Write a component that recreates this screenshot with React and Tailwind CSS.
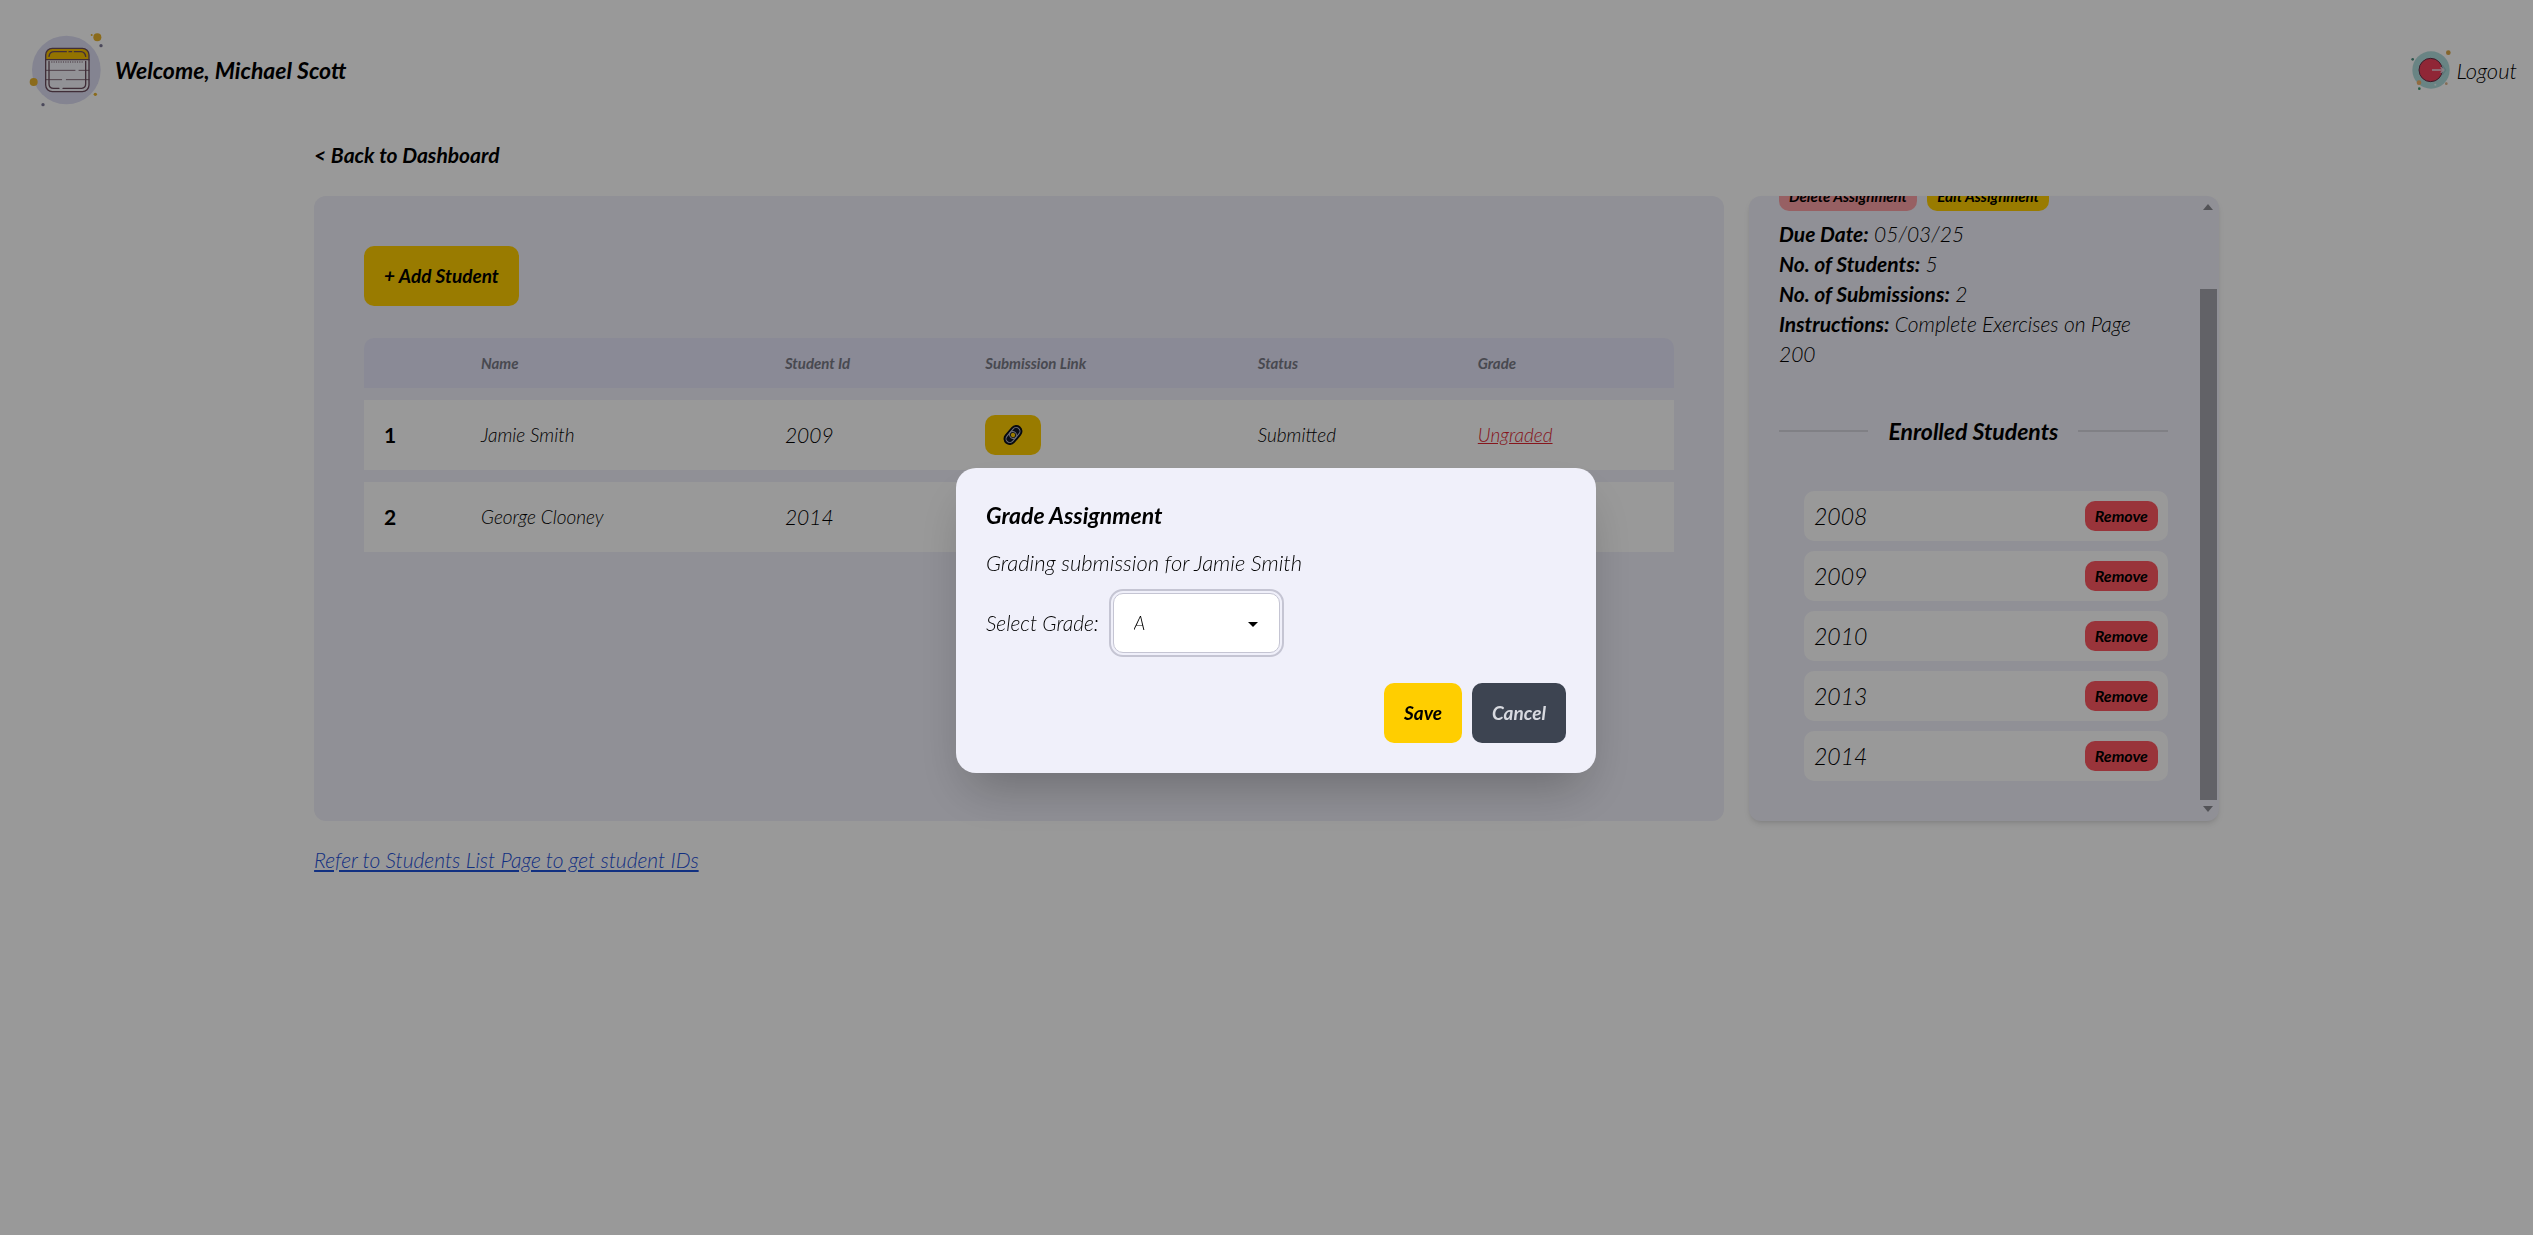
import React from "react";

const submissions = [
  { name: "Jamie Smith", id: "2009", status: "Submitted", grade: "Ungraded" },
  { name: "George Clooney", id: "2014", status: "Submitted", grade: "Ungraded" },
];

const enrolled = ["2008", "2009", "2010", "2013", "2014"];

function NotebookLogo() {
  return (
    <svg viewBox="20 30 240 240" className="size-20" fill="none" aria-hidden="true">
      <circle cx="138" cy="150" r="103" fill="#dcdcf2" />
      <circle cx="231" cy="52" r="12" fill="#e8b32e" />
      <circle cx="214" cy="45" r="3" fill="#e8b32e" />
      <circle cx="242" cy="77" r="5" fill="#7d7a98" />
      <circle cx="40" cy="186" r="12" fill="#e8b32e" />
      <circle cx="225" cy="223" r="5" fill="#e8b32e" />
      <circle cx="68" cy="254" r="5" fill="#7d7a98" />
      <rect x="76" y="85" width="130" height="130" rx="20" fill="#f4f4fb" />
      <path d="M76 119v-14a20 20 0 0 1 20-20h90a20 20 0 0 1 20 20v14z" fill="#f5c000" />
      <g stroke="#6b4d5e" strokeWidth="4" strokeLinecap="round">
        <rect x="76" y="85" width="130" height="130" rx="20" />
        <path d="M76 119h130" />
        <path d="M76 151h88M176 151h30M76 179h48M138 179h68" strokeWidth="2.5" />
        <path d="M86 109q2-14 16-14h36M146 95h8M162 95h20q12 1 14 14" />
        <path d="M86 124v68q0 13 14 13h16M128 205h56q12-1 12-13v-68" />
        <path d="M94 126h96" strokeWidth="3" strokeDasharray="1 6" />
      </g>
    </svg>
  );
}

function LogoutIcon() {
  return (
    <svg viewBox="84 54 132 132" className="size-11" fill="none" aria-hidden="true">
      <circle cx="150" cy="120" r="56" fill="#b0dcdc" />
      <circle cx="149" cy="120" r="35" fill="#f0405a" stroke="#60334a" strokeWidth="3" />
      <path d="M153 120h32M179 112l9 8-9 8" stroke="#e8d5df" strokeWidth="4" />
      <path d="M184 105l10 15-10 15" stroke="#9cc8cc" strokeWidth="4" />
      <circle cx="202" cy="68" r="7" fill="#dca848" />
      <circle cx="114" cy="158" r="7" fill="#f2b36a" />
      <circle cx="95" cy="88" r="4" fill="#4c8f80" />
      <circle cx="115" cy="176" r="4" fill="#3f9a72" />
      <circle cx="196" cy="161" r="4" fill="#dcb48a" />
      <circle cx="163" cy="164" r="3" fill="#e8f4f4" />
    </svg>
  );
}

function ChainIcon() {
  return (
    <svg viewBox="0 0 24 24" className="size-6" fill="none" aria-hidden="true">
      <g transform="rotate(-50 12 12)">
        <rect x="1.500" y="6.500" width="21" height="11" rx="5.500" fill="#101828" stroke="#0b0f1a" strokeWidth="1.500" />
        <rect x="3.300" y="8.200" width="12" height="7.600" rx="3.800" stroke="#b8b8c8" strokeWidth="1" />
        <rect x="8.700" y="8.200" width="12" height="7.600" rx="3.800" stroke="#b8b8c8" strokeWidth="1" />
        <circle cx="12" cy="12" r="2.200" fill="#ffce00" />
      </g>
    </svg>
  );
}

function Header() {
  return (
    <header className="flex h-35 items-center justify-between pr-4 pl-[27px]">
      <div className="flex items-center gap-2">
        <NotebookLogo />
        <h1 className="text-[23px] font-bold">Welcome, Michael Scott</h1>
      </div>
      <button type="button" className="flex items-center gap-1 text-[22px]">
        <LogoutIcon />
        Logout
      </button>
    </header>
  );
}

function SubmissionsTable() {
  return (
    <table className="mt-5 w-full table-fixed border-separate border-spacing-x-0 border-spacing-y-3 text-left text-[19px]">
      <colgroup>
        <col className="w-[7.4%]" />
        <col className="w-[23.2%]" />
        <col className="w-[15.3%]" />
        <col className="w-[20.8%]" />
        <col className="w-[16.8%]" />
        <col className="w-[16.5%]" />
      </colgroup>
      <thead>
        <tr className="h-[50px] bg-[#e6e6fa] text-[15px] text-[#797a86]">
          <th className="rounded-tl-[10px] px-5" aria-label="Number" />
          <th className="px-5 font-bold">Name</th>
          <th className="px-5 font-bold">Student Id</th>
          <th className="px-5 font-bold">Submission Link</th>
          <th className="px-5 font-bold">Status</th>
          <th className="rounded-tr-[10px] px-5 font-bold">Grade</th>
        </tr>
      </thead>
      <tbody>
        {submissions.map((s, i) => (
          <tr key={s.id} className="h-[70px] bg-white">
            <th className="px-5 text-[21px] font-bold not-italic">{i + 1}</th>
            <td className="px-5">{s.name}</td>
            <td className="px-5 text-[21px]">{s.id}</td>
            <td className="px-5">
              <button
                type="button"
                aria-label="Open submission"
                className="flex h-10 w-14 items-center justify-center rounded-[10px] bg-[#ffce00]"
              >
                <ChainIcon />
              </button>
            </td>
            <td className="px-5">{s.status}</td>
            <td className="px-5">
              <button type="button" className="text-[#e02530] underline">
                {s.grade}
              </button>
            </td>
          </tr>
        ))}
      </tbody>
    </table>
  );
}

function ScrollRail() {
  return (
    <div className="mr-[2px] flex w-[17px] shrink-0 flex-col items-center" aria-hidden="true">
      <svg viewBox="0 0 10 6" className="mt-2 h-[6px] w-[10px]" fill="#8b8b92">
        <path d="M0 6l5-6 5 6z" />
      </svg>
      <div className="mt-[79px] w-full flex-1 bg-[#a4a4ac]" />
      <svg viewBox="0 0 10 6" className="mt-[6px] mb-[9px] h-[6px] w-[10px]" fill="#8b8b92">
        <path d="M0 0l5 6 5-6z" />
      </svg>
    </div>
  );
}

function Detail({ label, children }) {
  return (
    <p>
      <strong className="font-bold">{label}</strong> {children}
    </p>
  );
}

function AssignmentPanel() {
  return (
    <aside className="flex h-[625px] overflow-hidden rounded-xl bg-[#f0f0fa] shadow-md">
      <div className="flex min-w-0 flex-1 flex-col justify-end overflow-hidden pr-8 pb-10 pl-[30px]">
        <div className="flex shrink-0 gap-[10px]">
          <button type="button" className="h-[30px] rounded-[10px] bg-[#fca0a5] px-[10px] text-[15px] font-bold">
            Delete Assignment
          </button>
          <button type="button" className="h-[30px] rounded-[10px] bg-[#ffce00] px-[10px] text-[15px] font-bold">
            Edit Assignment
          </button>
        </div>
        <div className="mt-2 mb-[2px] text-[21px] leading-[30px]">
          <Detail label="Due Date:">05/03/25</Detail>
          <Detail label="No. of Students:">5</Detail>
          <Detail label="No. of Submissions:">2</Detail>
          <Detail label="Instructions:">Complete Exercises on Page 200</Detail>
        </div>
        <div className="flex h-30 shrink-0 items-center gap-5">
          <span className="h-[2px] flex-1 bg-[#d5d5de]" />
          <h2 className="text-[23px] font-bold">Enrolled Students</h2>
          <span className="h-[2px] flex-1 bg-[#d5d5de]" />
        </div>
        <ul className="flex flex-col gap-[10px] pl-[25px]">
          {enrolled.map((id) => (
            <li key={id} className="flex h-[50px] items-center justify-between rounded-[10px] bg-white px-[10px] text-[23px]">
              {id}
              <button type="button" className="h-[30px] rounded-[10px] bg-[#ff5861] px-[10px] text-[16px] font-bold">
                Remove
              </button>
            </li>
          ))}
        </ul>
      </div>
      <ScrollRail />
    </aside>
  );
}

function GradeDialog() {
  return (
    <div className="fixed inset-0 flex items-center justify-center bg-black/40 pl-[19px]">
      <div
        role="dialog"
        aria-modal="true"
        aria-labelledby="grade-title"
        className="mt-[6px] w-[640px] max-w-full rounded-[20px] bg-[#f0f0fa] p-[30px] text-[21px] shadow-2xl"
      >
        <h2 id="grade-title" className="text-[23px] leading-[35px] font-bold">
          Grade Assignment
        </h2>
        <p className="mt-[15px] text-[22px] leading-[30px]">Grading submission for Jamie Smith</p>
        <div className="mt-[15px] flex items-center gap-[14px]">
          <label htmlFor="grade">Select Grade:</label>
          <div className="relative">
            <select
              id="grade"
              defaultValue="A"
              className="h-[60px] w-[167px] appearance-none rounded-[10px] border border-[#c5c5d3] bg-white px-5 text-[19px] italic outline-2 outline-offset-2 outline-[#c5c5d3]"
            >
              <option>A</option>
              <option>B</option>
              <option>C</option>
              <option>D</option>
              <option>F</option>
            </select>
            <svg
              viewBox="0 0 10 5"
              className="pointer-events-none absolute top-[29px] right-[22px] h-[5px] w-[10px]"
              aria-hidden="true"
            >
              <path d="M0 0h10L5 5z" />
            </svg>
          </div>
        </div>
        <div className="mt-[30px] flex justify-end gap-[10px]">
          <button type="button" className="h-[60px] rounded-[10px] bg-[#ffce00] px-5 text-[19px] font-bold">
            Save
          </button>
          <button type="button" className="h-[60px] rounded-[10px] bg-[#3d4451] px-5 text-[19px] font-bold text-[#d8dae0]">
            Cancel
          </button>
        </div>
      </div>
    </div>
  );
}

export default function App() {
  return (
    <div className="min-h-screen bg-white font-['Lato',sans-serif] font-light text-black italic">
      <Header />
      <main className="mx-auto w-[75.2%]">
        <a href="#dashboard" className="block text-[21px] leading-[30px] font-bold">
          &lt; Back to Dashboard
        </a>
        <div className="mt-[26px] grid grid-cols-[3fr_1fr] gap-[25px]">
          <section className="rounded-xl bg-[#f0f0fa] px-[50px] pt-[50px]">
            <button type="button" className="block h-[60px] rounded-[10px] bg-[#ffce00] px-5 text-[19px] font-bold">
              + Add Student
            </button>
            <SubmissionsTable />
          </section>
          <AssignmentPanel />
        </div>
        <a href="#students" className="mt-6 inline-block text-[21px] leading-[30px] text-[#1d50d8] underline">
          Refer to Students List Page to get student IDs
        </a>
      </main>
      <GradeDialog />
    </div>
  );
}
